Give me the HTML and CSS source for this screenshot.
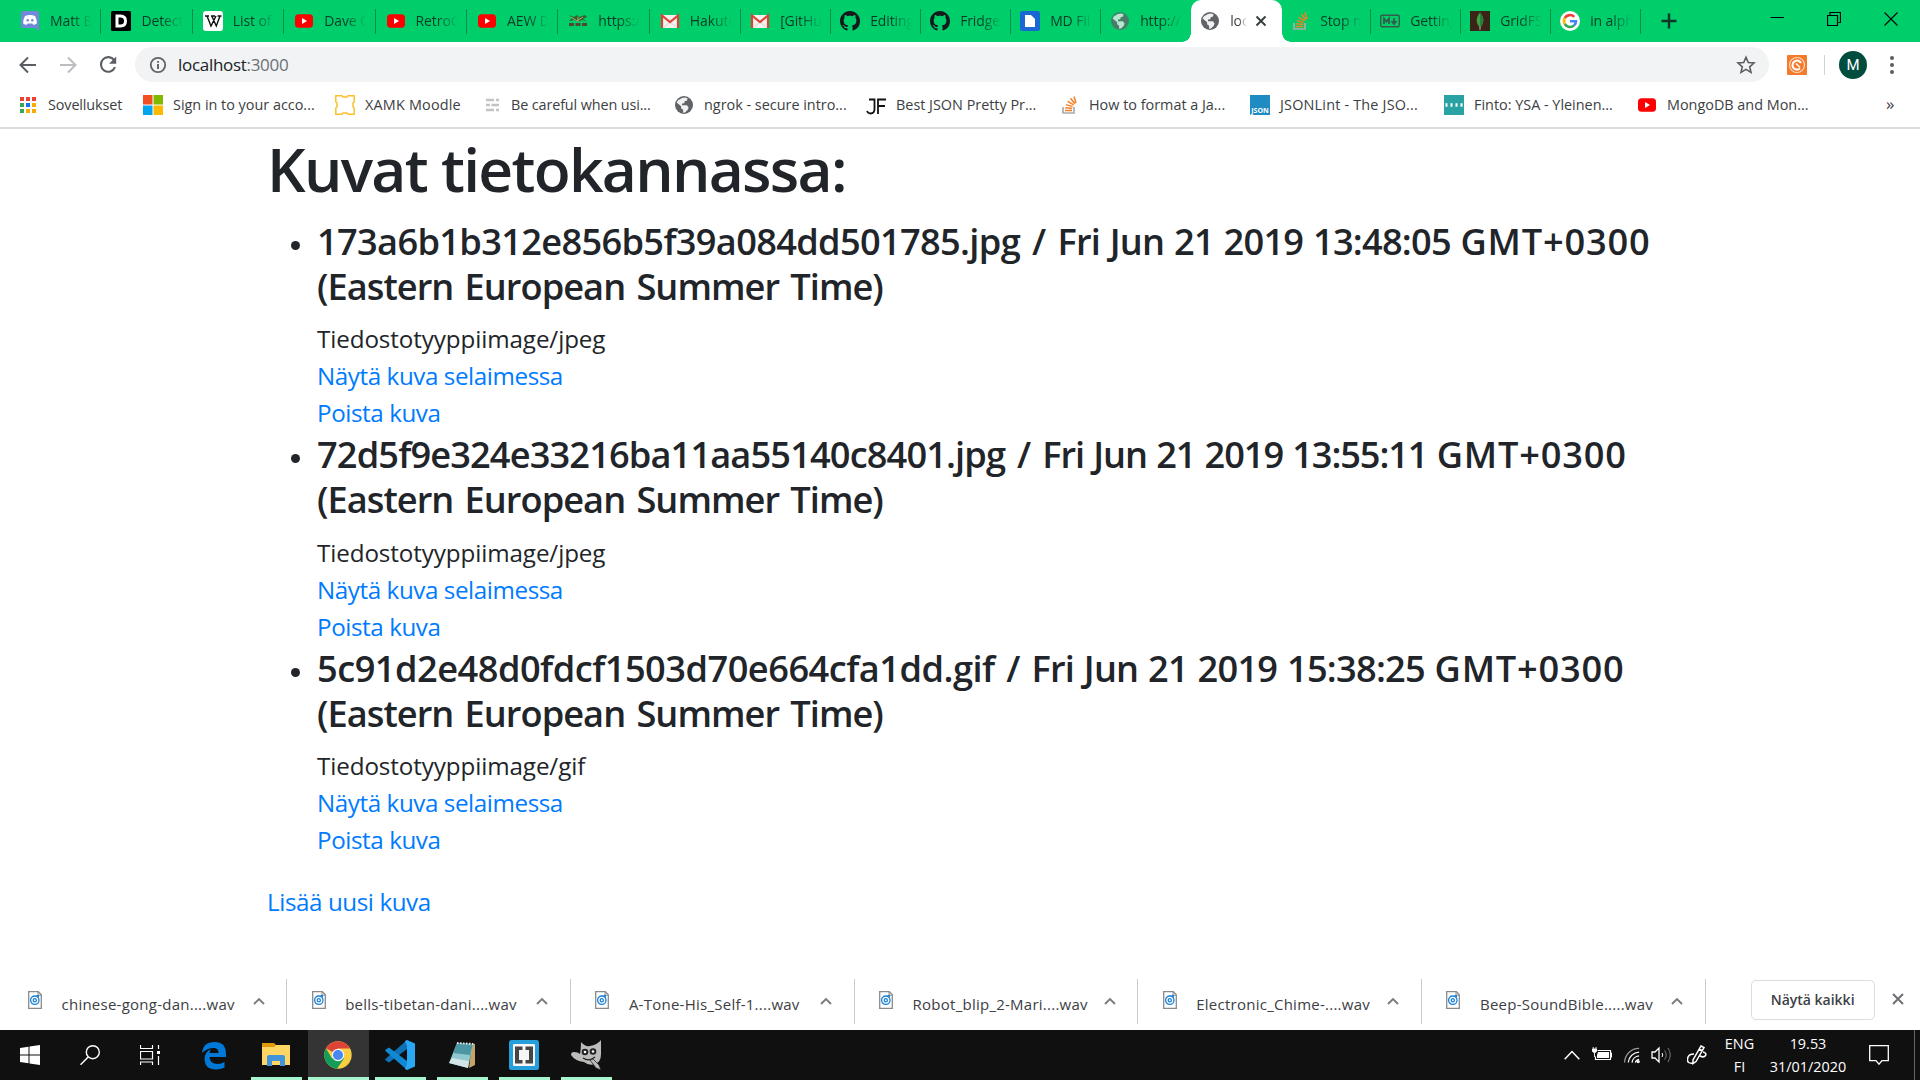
FILE: index.html
```html
<!DOCTYPE html>
<html lang="fi">
<head>
<meta charset="utf-8">
<title>localhost:3000</title>
<link rel="stylesheet" href="styles.css">
</head>
<body>
<svg class="defs" aria-hidden="true">
  <symbol id="yt" viewBox="0 0 20 20"><rect x="1" y="3.2" width="18" height="13.6" rx="3.5" fill="#f00"/><path d="M8 7l5 3-5 3z" fill="#fff"/></symbol>
  <symbol id="gmail" viewBox="0 0 20 20"><path d="M2 4h16v13H2z" fill="#f3f0ef"/><path d="M4 16l6-5 6 5" fill="none" stroke="#d5d5d5"/><path d="M2 17V4.500l8 6.500 8-6.500V17" fill="none" stroke="#dc4336" stroke-width="2.200"/></symbol>
  <symbol id="github" viewBox="0 0 16 16"><path fill="#16191c" d="M8 0C3.58 0 0 3.58 0 8c0 3.54 2.29 6.53 5.47 7.59.4.07.55-.17.55-.38 0-.19-.01-.82-.01-1.49-2.01.37-2.53-.49-2.69-.94-.09-.23-.48-.94-.82-1.13-.28-.15-.68-.52-.01-.53.63-.01 1.08.58 1.23.82.72 1.21 1.87.87 2.33.66.07-.52.28-.87.51-1.07-1.78-.2-3.64-.89-3.64-3.95 0-.87.31-1.59.82-2.15-.08-.2-.36-1.02.08-2.12 0 0 .67-.21 2.2.82.64-.18 1.32-.27 2-.27s1.36.09 2 .27c1.53-1.04 2.2-.82 2.2-.82.44 1.1.16 1.92.08 2.12.51.56.82 1.27.82 2.15 0 3.07-1.87 3.75-3.65 3.95.29.25.54.73.54 1.48 0 1.07-.01 1.93-.01 2.2 0 .21.15.46.55.38A8.01 8.01 0 0 0 16 8c0-4.42-3.58-8-8-8z"/></symbol>
  <symbol id="globe" viewBox="0 0 20 20"><circle cx="10" cy="10" r="9" fill="#5f6368"/><path d="M11 2.500l2.500.7-.4 2.300-2.400.8-.4 2-2.200.3-.2 1.600h5l1.700 2.200-1 2.500-2.600 2.700-1.900.2v-3l-2-1.600v-2L2.600 7.500 4 5.300 8 3z" fill="#fff" opacity=".9"/></symbol>
  <symbol id="so" viewBox="0 0 20 20"><path d="M4 12v6h11v-6" fill="none" stroke="#a9adb0" stroke-width="1.700"/><path d="M6 15.500h7M6.200 12.700l7 .8M7 9.600l6.700 2M8.700 6.300l6 3.600M11.500 3.300l4.400 5.400M15 1.500l2 6.500" stroke="#f48024" stroke-width="1.500"/></symbol>
  <symbol id="wav" viewBox="0 0 14 18"><path d="M.7.700h9.600l3 3v13.600H.7z" fill="#fff" stroke="#8a8a8a" stroke-width="1.300"/><path d="M10 .8v3.400h3.400" fill="none" stroke="#8a8a8a"/><circle cx="6.800" cy="9.200" r="4.200" fill="none" stroke="#1a82d8" stroke-width="1.300"/><circle cx="6.800" cy="9.200" r="1.600" fill="none" stroke="#1a82d8" stroke-width="1.300"/><path d="M8 4l3 3V4z" fill="#1a82d8"/></symbol>
  <symbol id="up" viewBox="0 0 12 8"><path d="M1 7l5-5 5 5" fill="none" stroke="#777b80" stroke-width="1.900"/></symbol>
</svg>

<header class="tabs">
  <div class="tab"><svg viewBox="0 0 20 20"><path d="M3 0h14a2 2 0 0 1 2 2v18l-4-3H3a2 2 0 0 1-2-2V2a2 2 0 0 1 2-2z" fill="#7289da"/><path d="M5 5q5-2 10 0 2.200 4 1.800 7.500-1.800 1.300-3.500 1.200l-1-1.200H7.700l-1 1.200q-1.700.1-3.500-1.200Q2.800 9 5 5z" fill="#fff"/><circle cx="7.700" cy="9.300" r="1.300" fill="#7289da"/><circle cx="12.300" cy="9.300" r="1.300" fill="#7289da"/></svg><span>Matt B</span></div>
  <div class="tab"><svg viewBox="0 0 20 20"><rect width="20" height="20" rx="1.500"/><path d="M6 5h3.500q5 0 5 5t-5 5H6z" fill="none" stroke="#fff" stroke-width="3"/></svg><span>Detect</span></div>
  <div class="tab"><svg viewBox="0 0 20 20"><rect width="20" height="20" rx="3" fill="#fff"/><path d="M2 5h4M8 5h4M14.500 5h4M4 5l4 10 5-10M8.800 5l4.500 10L17 5" fill="none" stroke="#111" stroke-width="1.400"/></svg><span>List of</span></div>
  <div class="tab"><svg><use href="#yt"/></svg><span>Dave C</span></div>
  <div class="tab"><svg><use href="#yt"/></svg><span>RetroG</span></div>
  <div class="tab"><svg><use href="#yt"/></svg><span>AEW D</span></div>
  <div class="tab"><svg viewBox="0 0 20 20"><path d="M1 4l5 2 3-2 2 2 6-2 2 2-4 2 4 2-5-1-4 2-4-2-5 1 3-3z" fill="#35612e"/><path d="M1 12h5v3H1zM7.500 12h5v3h-5zM14 12h5v3h-5z" fill="#514a32"/><path d="M3 6l6 4 6-4M10 6v5" stroke="#a3b568" fill="none"/></svg><span>https:/</span></div>
  <div class="tab"><svg><use href="#gmail"/></svg><span>Hakutu</span></div>
  <div class="tab"><svg><use href="#gmail"/></svg><span>[GitHu</span></div>
  <div class="tab"><svg><use href="#github"/></svg><span>Editing</span></div>
  <div class="tab"><svg><use href="#github"/></svg><span>Fridge</span></div>
  <div class="tab"><svg viewBox="0 0 20 20"><rect width="20" height="20" rx="2.500" fill="#1967d2"/><path d="M5 4h6l4 4v8H5z" fill="#fff"/></svg><span>MD Fil</span></div>
  <div class="tab last"><svg class="dim"><use href="#globe"/></svg><span>http://</span></div>
  <div class="tab active"><svg><use href="#globe"/></svg><span>loca</span><svg class="close" viewBox="0 0 12 12"><path d="M1.500 1.500l9 9M10.500 1.500l-9 9" stroke="#3c4043" stroke-width="2"/></svg></div>
  <div class="tab"><svg><use href="#so"/></svg><span>Stop n</span></div>
  <div class="tab"><svg viewBox="0 0 20 20"><rect x=".7" y="4.200" width="18.600" height="11.600" rx="1.500" fill="none" stroke="#355c4a" stroke-width="1.400"/><path d="M4 13V7.500l2.500 3 2.500-3V13M14 7v5M11.500 10l2.500 3 2.500-3" fill="none" stroke="#355c4a" stroke-width="1.800"/></svg><span>Getting</span></div>
  <div class="tab"><svg viewBox="0 0 20 20"><rect width="20" height="20" fill="#3a2417"/><path d="M10 1.500q7 8 0 15-7-7 0-15z" fill="#3fa344"/><path d="M10 1.500q7 8 0 15z" fill="#2c7f38"/><path d="M10 15v4" stroke="#a9b59d"/></svg><span>GridFS</span></div>
  <div class="tab"><svg viewBox="0 0 20 20"><circle cx="10" cy="10" r="10" fill="#fff"/><g fill="none" stroke-width="2.600"><path d="M14.300 5.900A6 6 0 0 0 4.800 7" stroke="#ea4335"/><path d="M4.800 7a6 6 0 0 0 0 6" stroke="#fbbc05"/><path d="M4.800 13a6 6 0 0 0 9.300 1.400" stroke="#34a853"/><path d="M14.100 14.400Q16 12.500 16 10.300h-6" stroke="#4285f4"/></g></svg><span>in alph</span></div>
  <svg class="plus" viewBox="0 0 16 16"><path d="M8 .5v15M.5 8h15" stroke="#12362a" stroke-width="2.400"/></svg>
  <div class="winctl">
    <svg viewBox="0 0 14 14"><path d="M.5 5.500h13.500" stroke="#000"/></svg>
    <svg viewBox="0 0 14 14"><path d="M.5 3.500h10v10H.5zM3 3V.5h10.500v10H11" fill="none" stroke="#000" stroke-width="1.200"/></svg>
    <svg viewBox="0 0 14 14"><path d="M.5.500l13 13M13.500.500l-13 13" stroke="#000" stroke-width="1.100"/></svg>
  </div>
</header>

<nav class="toolbar">
  <svg class="nav" viewBox="0 0 20 20"><path d="M18 10H3M10 2.500L2.500 10l7.500 7.500" fill="none" stroke="#5a5e63" stroke-width="2"/></svg>
  <svg class="nav" viewBox="0 0 20 20"><path d="M2 10h15M10 2.500l7.500 7.500-7.500 7.500" fill="none" stroke="#bbbdc0" stroke-width="2"/></svg>
  <svg class="nav" viewBox="0 0 20 20"><path d="M16.200 5.200A7.300 7.300 0 1 0 17 12.200" fill="none" stroke="#5a5e63" stroke-width="2.100"/><path d="M18.200 1.500v7.200H11z" fill="#5a5e63"/></svg>
  <div class="omnibox">
    <svg class="info" viewBox="0 0 18 18"><circle cx="9" cy="9" r="7.200" fill="none" stroke="#5f6368" stroke-width="1.800"/><path d="M9 8v5M9 5v1.800" stroke="#5f6368" stroke-width="1.900"/></svg>
    <span class="url">localhost<i>:3000</i></span>
    <svg class="star" viewBox="0 0 20 20"><path d="M10 2.200l2.300 5.300 5.700.5-4.300 3.800 1.300 5.600-5-3-5 3 1.300-5.600L2 8l5.700-.5z" fill="none" stroke="#5a5e63" stroke-width="1.600"/></svg>
  </div>
  <svg class="ext" viewBox="0 0 20 20"><rect width="20" height="20" rx="1" fill="#f47a2c"/><circle cx="10" cy="10" r="7.500" fill="none" stroke="#ffd9b8" stroke-width="1.200"/><path d="M14 8a4.500 4.500 0 1 0-1 5.500" fill="none" stroke="#fff" stroke-width="2"/><path d="M9 8.500l4 4" stroke="#fff" stroke-width="1.500"/></svg>
  <div class="rule"></div>
  <div class="avatar">M</div>
  <svg class="dots" viewBox="0 0 6 20"><circle cx="3" cy="3" r="2"/><circle cx="3" cy="10" r="2"/><circle cx="3" cy="17" r="2"/></svg>
</nav>

<nav class="bookmarks">
  <div class="bm"><svg viewBox="0 0 20 20"><path d="M2 2h4v4H2zM8 2h4v4H8zM14 2h4v4h-4z" fill="#ea4335"/><path d="M2 8h4v4H2zM2 14h4v4H2z" fill="#34a853"/><path d="M8 8h4v4H8z" fill="#1a73e8"/><path d="M14 8h4v4h-4zM8 14h4v4H8zM14 14h4v4h-4z" fill="#fbab09"/></svg><span class="snug">Sovellukset</span></div>
  <div class="bm"><svg viewBox="0 0 20 20"><path d="M0 0h9.500v9.500H0z" fill="#f25022"/><path d="M10.500 0H20v9.500h-9.500z" fill="#7fba00"/><path d="M0 10.500h9.500V20H0z" fill="#00a4ef"/><path d="M10.500 10.500H20V20h-9.500z" fill="#ffb900"/></svg><span>Sign in to your acco...</span></div>
  <div class="bm"><svg viewBox="0 0 20 20"><path d="M.8.800h6.200l1 1.200h4l1-1.200h6.200v6.200L18 8v4l1.200 1v6.200H13L12 18H8l-1 1.200H.8V13L2 12V8L.8 7z" fill="none" stroke="#fbc02d" stroke-width="1.500"/></svg><span class="wide">XAMK Moodle</span></div>
  <div class="bm lean"><svg viewBox="0 0 20 20"><path d="M3 5h8M13 5h3M3 10h4M8.500 10H16M3 15h8M13 15h3" stroke="#c1c4c3" stroke-width="2.400"/></svg><span class="snug">Be careful when usi...</span></div>
  <div class="bm"><svg><use href="#globe"/></svg><span>ngrok - secure intro...</span></div>
  <div class="bm"><svg viewBox="0 0 20 20"><path d="M3 4.500h5.500V14q0 4.500-4 4.500Q2 18.500 1 16M20 4.500h-8V19M12 11h7" fill="none" stroke="#111" stroke-width="1.800"/></svg><span>Best JSON Pretty Pr...</span></div>
  <div class="bm"><svg><use href="#so"/></svg><span>How to format a Ja...</span></div>
  <div class="bm"><b class="json">JSON</b><span class="wide">JSONLint - The JSO...</span></div>
  <div class="bm"><svg viewBox="0 0 20 20"><path d="M0 0h20v20H0z" fill="#28a2a2"/><path d="M1.500 10H19" stroke="#fff" stroke-width="3.500" stroke-dasharray="2 3"/></svg><span>Finto: YSA - Yleinen...</span></div>
  <div class="bm"><svg><use href="#yt"/></svg><span>MongoDB and Mon...</span></div>
  <div class="more">»</div>
</nav>

<main class="page">
  <h1>Kuvat tietokannassa:</h1>
  <ul>
    <li><div>
      <h4><span class="n1">173a6b1b312e856b5f39a084dd501785.jpg / <span class="date">Fri Jun 21 2019 13:48:05 </span><span class="gmt">GMT+0300</span></span><br>(Eastern European Summer Time)</h4>
      <p>Tiedostotyyppiimage/jpeg</p><p><a>Näytä kuva selaimessa</a></p><p><a>Poista kuva</a></p>
    </div></li>
    <li><div>
      <h4><span class="n2">72d5f9e324e33216ba11aa55140c8401.jpg / <span class="date">Fri Jun 21 2019 13:55:11 </span><span class="gmt">GMT+0300</span></span><br>(Eastern European Summer Time)</h4>
      <p>Tiedostotyyppiimage/jpeg</p><p><a>Näytä kuva selaimessa</a></p><p><a>Poista kuva</a></p>
    </div></li>
    <li><div>
      <h4><span class="n3">5c91d2e48d0fdcf1503d70e664cfa1dd.gif / <span class="date">Fri Jun 21 2019 15:38:25 </span><span class="gmt">GMT+0300</span></span><br>(Eastern European Summer Time)</h4>
      <p>Tiedostotyyppiimage/gif</p><p><a>Näytä kuva selaimessa</a></p><p><a>Poista kuva</a></p>
    </div></li>
  </ul>
  <p><a>Lisää uusi kuva</a></p>
</main>

<section class="downloads">
  <div class="dl"><svg class="file"><use href="#wav"/></svg><span>chinese-gong-dan....wav</span><svg class="caret"><use href="#up"/></svg></div>
  <div class="dl"><svg class="file"><use href="#wav"/></svg><span>bells-tibetan-dani....wav</span><svg class="caret"><use href="#up"/></svg></div>
  <div class="dl"><svg class="file"><use href="#wav"/></svg><span>A-Tone-His_Self-1....wav</span><svg class="caret"><use href="#up"/></svg></div>
  <div class="dl"><svg class="file"><use href="#wav"/></svg><span>Robot_blip_2-Mari....wav</span><svg class="caret"><use href="#up"/></svg></div>
  <div class="dl"><svg class="file"><use href="#wav"/></svg><span>Electronic_Chime-....wav</span><svg class="caret"><use href="#up"/></svg></div>
  <div class="dl"><svg class="file"><use href="#wav"/></svg><span>Beep-SoundBible.....wav</span><svg class="caret"><use href="#up"/></svg></div>
  <button class="all">Näytä kaikki</button>
  <svg class="dlclose" viewBox="0 0 12 12"><path d="M1 1l10 10M11 1L1 11" stroke="#6c7075" stroke-width="2"/></svg>
</section>

<footer class="taskbar">
  <div class="sys"><svg viewBox="0 0 20 20"><path d="M0 3l8.500-1.200v7.700H0zM9.500 1.600L20 0v9.500H9.500zM0 10.500h8.500v7.700L0 17zM9.500 10.500H20V20L9.500 18.400z" fill="#fff"/></svg></div>
  <div class="sys"><svg viewBox="0 0 20 20"><circle cx="12.800" cy="7.200" r="6.500" fill="none" stroke="#fff" stroke-width="1.400"/><path d="M8.200 12L.5 19.700" stroke="#fff" stroke-width="1.500"/></svg></div>
  <div class="sys"><svg viewBox="0 0 20 20"><path d="M.5 0v3.500h12V0M.5 6.500h12v7.500H.5zM.5 20v-3h12v3M18.500 0v4M18.500 11v9" fill="none" stroke="#fff" stroke-width="1.200"/><path d="M17 6h3v3h-3z" fill="#fff"/></svg></div>
  <div class="sys edge"><svg class="big" viewBox="0 0 28 30"><path d="M2 13Q3 2 14.500 2 26 2 26 14v3H9.500q.5 7 8 7 3.500 0 7-2v5.500Q21 29.500 16 29.500 5 29.500 4.500 19 4.500 12 11 9 9.500 10.500 9.500 13h9q0-5-5-5-6 0-11.500 5z" fill="#0078d7"/></svg></div>
  <div class="app"><svg class="big" viewBox="0 0 28 30"><path d="M0 5h28v20H0z" fill="#ffd563"/><path d="M0 3h12l2 2-2 2H0z" fill="#e09a0c"/><path d="M5 26V17q0-2 2-2h14q2 0 2 2v9h-5v-5h-8v5z" fill="#3f94dc"/></svg></div>
  <div class="app on"><svg class="big" viewBox="0 0 28 30"><circle cx="14" cy="15" r="13.700" fill="#fbcd42"/><path d="M14 15L2 8.200A13.700 13.700 0 0 1 26 8.500H14z" fill="#db4437"/><path d="M2 8.200A13.700 13.700 0 0 0 13 28.700L20 18.500 14 15 8 18.500z" fill="#129d59"/><circle cx="14" cy="15" r="6.200" fill="#f4f4f4"/><circle cx="14" cy="15" r="5" fill="#4788f2"/></svg></div>
  <div class="app"><svg class="vs" viewBox="0 0 30 30"><path d="M22 0v9L4 22.500 0 20l1-1.500z" fill="#0f70b8"/><path d="M22 30v-9L4 7.500 0 10l1 1.500z" fill="#1089d2"/><path d="M22 0l8 3.500v23L22 30l-2-1 2-5V6l-2-5z" fill="#2aa7f2"/></svg></div>
  <div class="app"><svg class="big" viewBox="0 0 28 30"><path d="M24 3l3 1v21l-6 3z" fill="#c5a468"/><path d="M9 3l16 1-5 24L1 23z" fill="#8fc8d1"/><path d="M9 3l16 1-3 11L5 13z" fill="#4d97a5"/><path d="M4 18l17 3-1 7L1 23z" fill="#d2e6ea"/><path d="M9 3l16 1" stroke="#e8e8e8" stroke-width="2" stroke-dasharray="1.500 1.500"/></svg></div>
  <div class="app"><svg class="vs" viewBox="0 0 30 30"><rect width="30" height="30" rx="2.500" fill="#249fdb"/><rect x="4" y="4" width="22" height="22" rx="1" fill="#f6f6f6"/><path d="M13.500 6.500H6v17h7.500V20H10V10h3.500zM16.500 6.500H24v17h-7.500V20H20V10h-3.500z" fill="#454545"/></svg></div>
  <div class="app"><svg class="vs" viewBox="0 0 30 30"><path d="M10 2q4 5 9 4 7-1 11-6v14q0 8-6 10-6 2-11-2-9-1-13-7 0-3 3-3 4 0 6 2 1-5 1-12z" fill="#bcbcba"/><circle cx="14" cy="12" r="3.300" fill="#222"/><circle cx="22" cy="11.500" r="3.300" fill="#222"/><circle cx="14" cy="12" r="1.300" fill="#fff"/><circle cx="22" cy="11.500" r="1.300" fill="#fff"/><path d="M12 18q6 4 12-1" stroke="#222" stroke-width="1.200" fill="none"/><path d="M19 20l3-1 6 6 2 5-5-2z" fill="#bbb" stroke="#222" stroke-width=".8"/></svg></div>
  <div class="tray">
    <svg class="t1" viewBox="0 0 16 10"><path d="M.7 9.300L8 1.500l7.300 7.800" fill="none" stroke="#fff" stroke-width="1.500"/></svg>
    <svg class="t2" viewBox="0 0 20 20"><path d="M5.500 5.500h13v9h-15v-3" fill="none" stroke="#fff" stroke-width="1.200"/><path d="M6 7h11v6H5v-3z" fill="#fff"/><path d="M19 8h1v4h-1zM.5 4h4v2.500L2.500 8l-2-1.500zM1.200 2v2M4 2v2M2.500 8v4" fill="#fff" stroke="#fff" stroke-width=".9"/></svg>
    <svg class="t3" viewBox="0 0 18 20"><g fill="none" stroke="#fff" stroke-width="1.300"><path d="M.7 18A15 15 0 0 1 16 3" stroke="#999"/><path d="M4.500 18A12 12 0 0 1 16 7M8.500 18a8 8 0 0 1 7.500-7"/><path d="M12 18q.5-3 4-3.500"/></g><circle cx="15" cy="17" r="1.700" fill="#fff"/></svg>
    <svg class="t4" viewBox="0 0 22 20"><path d="M1 7h3l4-4v14l-4-4H1z" fill="none" stroke="#fff" stroke-width="1.300"/><path d="M11 8q1.500 2 0 4" fill="none" stroke="#fff"/><path d="M13.500 5.500q3.500 4.500 0 9M17 3q4.500 7 0 14" fill="none" stroke="#777"/></svg>
    <svg class="t5" viewBox="0 0 20 20"><path d="M14 1l3 1.500-8 14-3 2 0-3.500zM12 4l3 1.500M7 9q-6 0-6.500 5t5.500 4M13 11q4 2 5.500-.5T16 7" fill="none" stroke="#fff" stroke-width="1.500"/></svg>
  </div>
  <div class="lang"><span>ENG</span><span>FI</span></div>
  <div class="clock"><span>19.53</span><span>31/01/2020</span></div>
  <svg class="note" viewBox="0 0 20 20"><path d="M.7.700h18.600v15H13l-3 3.500-3-3.500H.7z" fill="none" stroke="#fff" stroke-width="1.300"/></svg>
  <div class="peek"></div>
</footer>
</body>
</html>
```
FILE: styles.css
```css
* { box-sizing: border-box; }
body { margin: 0; width: 1920px; height: 1080px; overflow: hidden; background: #fff; display: flex; flex-direction: column; font: 14px "Open Sans", "Noto Sans", sans-serif; color: #3c4043; }
svg { display: block; flex: none; }
.defs { display: none; }

.tabs { height: 42px; flex: none; display: flex; background: #00ce6b; padding-left: 10px; }
.tab { width: 90px; flex: none; height: 42px; display: flex; align-items: center; padding-left: 9px; color: #0b3b26; position: relative; }
.tab svg { width: 20px; height: 20px; }
.tab span { margin: 0 0 2px 10px; width: 42px; overflow: hidden; white-space: nowrap; letter-spacing: -.1px; -webkit-mask-image: linear-gradient(90deg, #000 50%, transparent); mask-image: linear-gradient(90deg, #000 50%, transparent); }
.tab::after { content: ""; position: absolute; right: 0; top: 9px; width: 1px; height: 25px; background: #0b8c4e; }
.tab:nth-child(-n+8) { width: 91.4px; padding-left: 10px; }
.tab.last::after { display: none; }
.tab.active { background: #fff; border-radius: 10px 10px 0 0; width: 91px; margin-right: -1px; color: #3c4043; z-index: 1; }
.tab.active::before, .tab.active::after { content: ""; position: absolute; top: auto; bottom: 0; width: 9px; height: 9px; }
.tab.active::before { left: -9px; background: radial-gradient(circle at 0 0, transparent 8.5px, #fff 9px); }
.tab.active::after { right: -9px; background: radial-gradient(circle at 100% 0, transparent 8.5px, #fff 9px); }
.tab.active span { width: 17px; }
.tab.active .close { width: 12px; height: 12px; margin-left: 8px; }
.dim { opacity: .75; }
.plus { width: 16px; height: 16px; margin: 13px 0 0 20px; }
.winctl { margin-left: auto; display: flex; gap: 43px; padding: 12px 22px 0 0; }
.winctl svg { width: 14px; height: 14px; }

.toolbar { height: 45px; flex: none; display: flex; align-items: center; padding: 0 0 0 18px; }
.nav { width: 20px; height: 20px; margin-right: 20px; }
.omnibox { margin-left: -3px; width: 1634px; height: 35px; border-radius: 18px; background: #f1f3f4; display: flex; align-items: center; padding-left: 14px; }
.info { width: 18px; height: 18px; }
.url { margin: 0 0 1px 11px; font-size: 17px; letter-spacing: -.3px; color: #202124; }
.url i { font-style: normal; color: #6b6f74; }
.star { width: 20px; height: 20px; margin-left: auto; margin-right: 13px; }
.ext { width: 20px; height: 20px; margin-left: 18px; }
.rule { width: 1px; height: 20px; background: #d0d2d5; margin-left: 17px; }
.avatar { width: 28px; height: 28px; border-radius: 50%; background: #004d40; color: #fff; font: 15px/28px Roboto, sans-serif; text-align: center; margin-left: 14px; }
.dots { width: 6px; height: 20px; fill: #5a5e63; margin-left: 22px; }

.bookmarks { height: 42px; flex: none; display: grid; grid-template-columns: 125px 192px 148px 191px 192px 193px 191px 194px 193px 249px 1fr; align-items: center; padding: 0 0 4px 18px; border-bottom: 2px solid #dadce0; white-space: nowrap; font-size: 14.4px; }
.bm { display: flex; align-items: center; }
.bm span { margin-bottom: 2px; }
.bm svg, .json { width: 20px; height: 20px; margin-right: 10px; flex: none; }
.bm.lean svg { margin-right: 8px; }
.snug { letter-spacing: -.12px; }
.wide { letter-spacing: .2px; }
.json { background: #1e8bc3; color: #fff; font-size: 7px; line-height: 31px; text-align: center; }
.more { font-size: 17px; padding-bottom: 3px; }

.page { flex: 1; padding: 2px 0 0 267px; color: #212529; font-size: 24.2px; line-height: 37px; white-space: nowrap; }
h1, h4, p, ul { margin: 0; font-weight: 600; }
p { font-weight: 400; letter-spacing: -.1px; }
h1 { font-size: 60.5px; line-height: 75px; margin-bottom: 12.5px; letter-spacing: -1.7px; }
h4 { font-size: 36.2px; line-height: 45px; margin-bottom: 11.5px; letter-spacing: -.96px; word-spacing: 2.8px; }
.n1 { letter-spacing: -.667px; word-spacing: 3.2px; }
.n2 { letter-spacing: -.864px; word-spacing: 3.4px; }
.n3 { letter-spacing: -.51px; word-spacing: 2.7px; }
.date { letter-spacing: -.75px; word-spacing: 1px; }
.n2 .date { letter-spacing: -1.1px; }
.gmt { letter-spacing: .8px; }
ul { padding: 0; list-style: none; margin-bottom: 24px; }
li { display: flex; padding-bottom: 1px; }
li::before { content: ""; width: 9px; height: 9px; border-radius: 50%; background: #212529; margin: 22px 17.5px 0 23.5px; }
a { color: #007bff; letter-spacing: -.42px; }

.downloads { height: 51px; flex: none; display: flex; padding-left: 3.5px; }
.dl { width: 283.7px; height: 45px; display: flex; border-right: 1px solid #c9cbce; padding: 12px 0 0 24.5px; }
.dl .file { width: 14px; height: 18px; }
.dl span { margin: 3px 0 0 19.5px; width: 192px; white-space: nowrap; font-size: 15px; line-height: 20px; letter-spacing: .25px; }
.dl .caret { width: 12px; height: 8px; margin: 6px 0 0 -1px; }
.all { margin: 1px 0 0 45px; width: 124px; height: 40px; border: 1px solid #dadce0; border-radius: 5px; background: #fff; font: 600 14px "Open Sans", sans-serif; color: #3c4043; padding: 0 0 2px; }
.dlclose { width: 12px; height: 12px; margin: 14px 0 0 17px; }

.taskbar { height: 50px; flex: none; display: flex; background: #101010; color: #fff; }
.sys { width: 60px; display: flex; justify-content: center; align-items: center; }
.sys svg { width: 20px; height: 20px; }
.sys svg.big, .big { width: 28px; height: 30px; }
.sys.edge { width: 71px; padding-right: 3px; }
.vs { width: 30px; height: 30px; }
.app { width: 51px; margin-right: 11px; display: flex; justify-content: center; align-items: center; border-bottom: 3px solid #a6f5cf; padding: 3px 1px 0 0; }
.app.on { width: 61px; background: #343434; margin: 0 6px 0 -5px; }
.tray { margin-left: auto; display: flex; align-items: center; }
.tray svg { height: 20px; }
.tray .t1 { width: 16px; height: 10px; margin-right: 12px; }
.t2 { width: 20px; margin-right: 12px; }
.t3 { width: 17px; margin-right: 10px; }
.t4 { width: 22px; margin-right: 14px; }
.t5 { width: 20px; }
.lang, .clock { display: flex; flex-direction: column; align-items: center; line-height: 22.5px; padding-top: 3px; }
.lang { width: 33px; margin-left: 16px; font-size: 14.4px; }
.clock { width: 80px; margin-left: 12px; font-size: 14.4px; }
.note { width: 20px; height: 20px; margin: 15px 0 0 21px; }
.peek { border-left: 1px solid #666; width: 6px; margin-left: 25px; }
```
